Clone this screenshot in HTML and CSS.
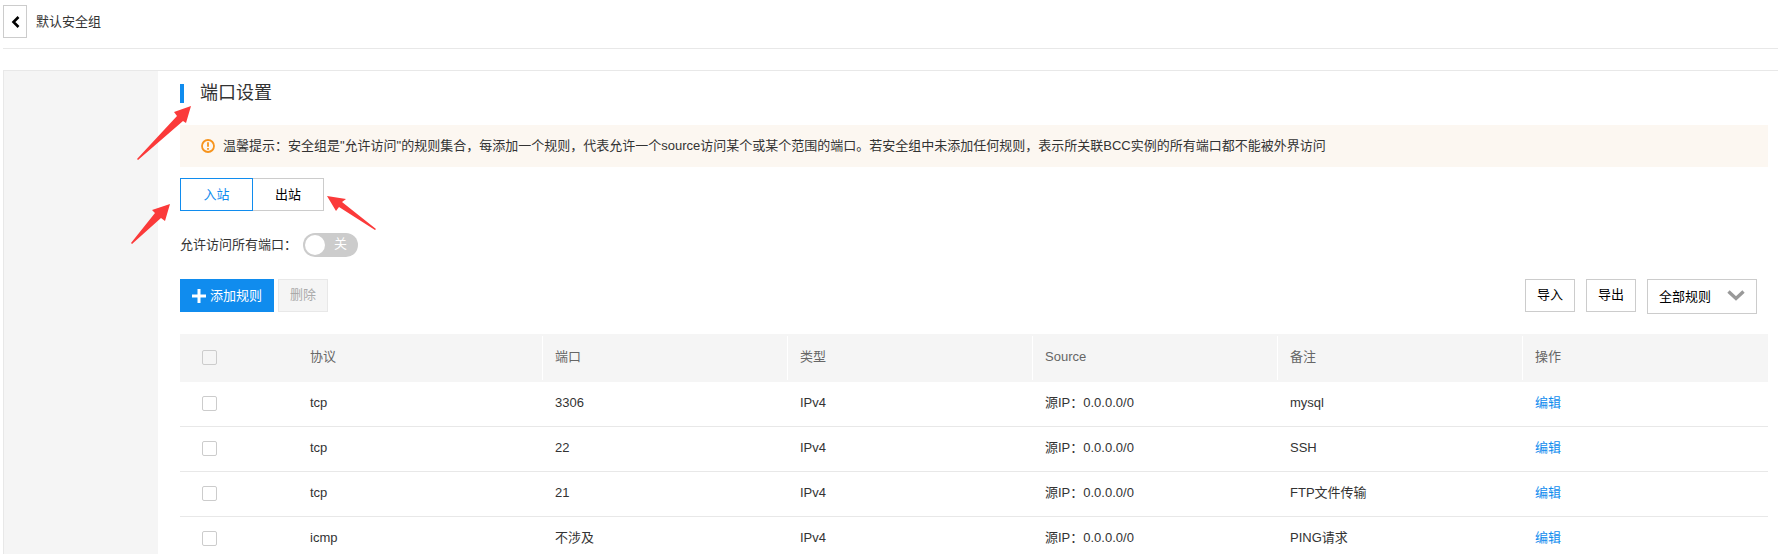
FILE: index.html
```html
<!DOCTYPE html>
<html lang="zh-CN">
<head>
<meta charset="utf-8">
<title>默认安全组</title>
<link rel="stylesheet" href="styles.css">
</head>
<body>
<header class="topbar">
  <button class="back" type="button" aria-label="返回">
    <svg width="10" height="12" viewBox="0 0 10 12"><path d="M8.500 1 3.500 6l5 5" fill="none" stroke="#000" stroke-width="2.6"/></svg>
  </button>
  <h1 class="page-title">默认安全组</h1>
</header>
<div class="panel">
  <aside class="side"></aside>
  <main class="content">
    <h2 class="section-title">端口设置</h2>
    <p class="notice">
      <svg class="notice-icon" width="14" height="14" viewBox="0 0 14 14"><circle cx="7" cy="7" r="6" fill="none" stroke="#f7941d" stroke-width="1.8"/><path d="M7 3.2v4.600M7 9v1.800" stroke="#f7941d" stroke-width="1.8"/></svg>
      <span>温馨提示：安全组是"允许访问"的规则集合，每添加一个规则，代表允许一个source访问某个或某个范围的端口。若安全组中未添加任何规则，表示所关联BCC实例的所有端口都不能被外界访问</span>
    </p>
    <div class="tabs">
      <button class="tab tab-active" type="button">入站</button>
      <button class="tab" type="button">出站</button>
    </div>
    <div class="switch-row">
      <label for="all-ports">允许访问所有端口：</label>
      <span class="switch">
        <input class="switch-input" id="all-ports" type="checkbox" role="switch">
        <span class="switch-text">关</span>
      </span>
    </div>
    <div class="toolbar">
      <button class="btn btn-primary" type="button"><svg width="14" height="14" viewBox="0 0 14 14"><path d="M7 0v14M0 7h14" stroke="#fff" stroke-width="3"/></svg>添加规则</button>
      <button class="btn btn-disabled" type="button" disabled>删除</button>
      <div class="toolbar-right">
        <button class="btn" type="button">导入</button>
        <button class="btn" type="button">导出</button>
        <span class="select-wrap">
          <select class="select" aria-label="规则筛选"><option>全部规则</option></select>
          <svg class="chevron" width="18" height="12" viewBox="0 0 18 12"><path d="M1.500 1.500 9 8.500l7.500-7" fill="none" stroke="#999" stroke-width="3.4"/></svg>
        </span>
      </div>
    </div>
    <table class="rules">
      <thead>
        <tr><th class="check"><input type="checkbox" aria-label="全选"></th><th>协议</th><th>端口</th><th>类型</th><th>Source</th><th>备注</th><th>操作</th></tr>
      </thead>
      <tbody>
        <tr><td class="check"><input type="checkbox" aria-label="选择 3306"></td><td>tcp</td><td>3306</td><td>IPv4</td><td>源IP：0.0.0.0/0</td><td>mysql</td><td><a href="#">编辑</a></td></tr>
        <tr><td class="check"><input type="checkbox" aria-label="选择 22"></td><td>tcp</td><td>22</td><td>IPv4</td><td>源IP：0.0.0.0/0</td><td>SSH</td><td><a href="#">编辑</a></td></tr>
        <tr><td class="check"><input type="checkbox" aria-label="选择 21"></td><td>tcp</td><td>21</td><td>IPv4</td><td>源IP：0.0.0.0/0</td><td>FTP文件传输</td><td><a href="#">编辑</a></td></tr>
        <tr><td class="check"><input type="checkbox" aria-label="选择 icmp"></td><td>icmp</td><td>不涉及</td><td>IPv4</td><td>源IP：0.0.0.0/0</td><td>PING请求</td><td><a href="#">编辑</a></td></tr>
      </tbody>
    </table>
  </main>
</div>
<svg class="arrow arrow-title" width="54" height="54" viewBox="0 0 54 54"><path d="M54 0 37 6l3 4L0 53l1 1L46 15l3 2Z" fill="#fb3a3a"/></svg>
<svg class="arrow arrow-in" width="39" height="40" viewBox="0 0 39 40"><path d="M39 0 21 6l3 3L0 39l1 1L30 14l4 3Z" fill="#fb3a3a"/></svg>
<svg class="arrow arrow-out" width="49" height="35" viewBox="0 0 49 35"><path d="M0 0 9 15l3-4 36 23 1-1L15 6l4-3Z" fill="#fb3a3a"/></svg>
</body>
</html>
```
FILE: styles.css
```css
* { box-sizing: border-box; }
body {
  margin: 0;
  background: #fff;
  color: #333;
  font: 13px/20px "Liberation Sans", "Noto Sans CJK SC", sans-serif;
  height: 100vh;
  overflow: hidden;
}
button, select, input { font: inherit; margin: 0; }
.topbar {
  display: flex;
  align-items: center;
  gap: 9px;
  margin-left: 3px;
  height: 49px;
  padding-bottom: 5px;
  border-bottom: 1px solid #e8e8e8;
}
.back {
  display: flex;
  align-items: center;
  justify-content: center;
  width: 24px;
  height: 33px;
  padding: 0;
  border: 1px solid #ccc;
  background: #fff;
}
.page-title { margin: 0; font-size: 13px; font-weight: 400; }
.panel {
  display: flex;
  margin: 21px 0 0 3px;
  border: solid #e8e8e8;
  border-width: 1px 0 0 1px;
}
.side { width: 154px; background: #f5f5f5; }
.content { flex: 1; padding: 10px 10px 0 22px; }
.section-title {
  display: flex;
  align-items: center;
  gap: 16px;
  margin: 0;
  font-size: 18px;
  font-weight: 400;
  line-height: 24px;
}
.section-title::before { content: ""; width: 4px; height: 19px; background: #108cee; }
.notice {
  display: flex;
  align-items: center;
  gap: 8px;
  margin: 20px 0 11px;
  padding: 11px 21px;
  background: #fcf7f1;
}
.tabs { display: flex; }
.tab {
  width: 71px;
  height: 33px;
  padding: 0;
  border: 1px solid #ccc;
  border-left: 0;
  background: #fff;
  color: #000;
}
.tab-active { width: 73px; border: 1px solid #108cee; color: #108cee; }
.switch-row { display: flex; align-items: center; gap: 6px; margin: 22px 0; }
.switch { position: relative; display: flex; color: #fff; }
.switch-input {
  appearance: none;
  width: 55px;
  height: 24px;
  padding: 2px;
  border-radius: 12px;
  background: #ccc;
}
.switch-input::before { content: ""; display: block; width: 20px; height: 20px; border-radius: 50%; background: #fff; }
.switch-text { position: absolute; right: 11px; top: 1px; pointer-events: none; }
.toolbar { display: flex; align-items: flex-start; gap: 4px; margin-bottom: 20px; }
.toolbar-right { display: flex; gap: 11px; align-items: flex-start; margin: 0 11px 0 auto; }
.btn {
  display: flex;
  align-items: center;
  gap: 4px;
  height: 33px;
  padding: 0 11px 2px;
  border: 1px solid #ccc;
  background: #fff;
  color: #000;
}
.btn-primary { padding-bottom: 0; border-color: #108cee; background: #108cee; color: #fff; }
.btn-disabled { border-color: #e8e8e8; background: #f5f5f5; color: #aaa; }
.select-wrap { position: relative; display: flex; }
.select {
  appearance: none;
  width: 110px;
  height: 35px;
  padding: 0 11px;
  border: 1px solid #ccc;
  border-radius: 0;
  background: #fff;
  color: #000;
}
.chevron { position: absolute; right: 12px; top: 11px; pointer-events: none; }
.rules { width: 100%; border-collapse: separate; border-spacing: 0; table-layout: fixed; }
th, td { padding: 0 12px 2px; text-align: left; font-weight: 400; }
th {
  height: 48px;
  background: linear-gradient(#fff, #fff) right center / 1px 44px no-repeat #f5f5f5;
  color: #666;
}
th:first-child, th:last-child { background: #f5f5f5; }
td { height: 45px; border-bottom: 1px solid #e8e8e8; }
.check { width: 118px; padding-left: 22px; }
.check input {
  appearance: none;
  display: block;
  width: 15px;
  height: 15px;
  border: 1px solid #ccc;
  border-radius: 2px;
  background: transparent;
}
a { color: #108cee; text-decoration: none; }
.arrow { position: absolute; }
.arrow-title { left: 137px; top: 106px; }
.arrow-in { left: 131px; top: 204px; }
.arrow-out { left: 327px; top: 196px; }
```
